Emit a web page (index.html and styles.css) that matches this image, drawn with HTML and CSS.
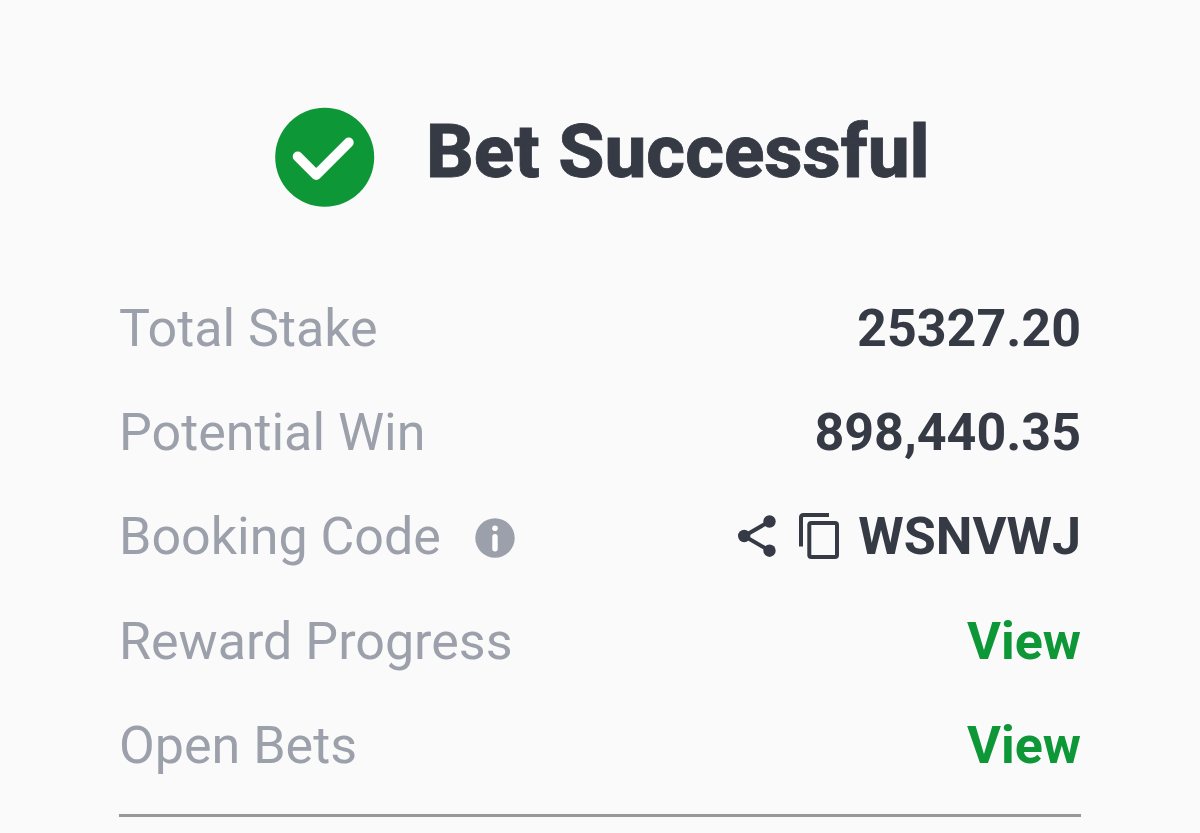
FILE: index.html
```html
<!DOCTYPE html>
<html lang="en">

<head>
    <meta charset="UTF-8">
    <meta name="viewport" content="width=device-width, initial-scale=1.0">
    <title>Bet Successful</title>
    <link rel="stylesheet" href="styles.css">
</head>

<body>
<div class="container">
    <div class="header">
        <svg class="success-icon" viewBox="0 0 100 100">
            <circle cx="49.7" cy="50.2" r="49.5" fill="#0d9737"/>
            <path d="M22.7 49.5 L41.2 68 L73.7 35.5" fill="none" stroke="#fff" stroke-width="10" stroke-linecap="round" stroke-linejoin="round"/>
        </svg>
        <h1>Bet Successful</h1>
    </div>

    <!-- Bet details -->
    <div class="details">
        <div class="row">
            <span class="label">Total Stake</span>
            <span class="value">25327.20</span>
        </div>
        <div class="row">
            <span class="label">Potential Win</span>
            <span class="value">898,440.35</span>
        </div>
        <div class="row">
            <span class="label">Booking Code</span>
            <svg class="info-icon" viewBox="0 0 40 40">
                <circle cx="20" cy="20" r="19.7" fill="#9ca0ab"/>
                <circle cx="20" cy="10.2" r="2.8" fill="#fff"/>
                <rect x="17.3" y="16" width="5.4" height="17.5" rx="2.7" fill="#fff"/>
            </svg>
            <span class="value code">
                <svg class="share-icon" viewBox="0 0 40 42">
                    <path d="M31.5 6.5 L6.2 21 L31.5 35.7" fill="none" stroke="#353a45" stroke-width="4"/>
                    <circle cx="31.5" cy="6.5" r="6.2" fill="#353a45"/>
                    <circle cx="6.2" cy="21" r="6.2" fill="#353a45"/>
                    <circle cx="31.5" cy="35.7" r="6.2" fill="#353a45"/>
                </svg>
                <svg class="copy-icon" viewBox="0 0 40 46">
                    <path d="M2 33.5 V4.5 Q2 2 4.5 2 H30" fill="none" stroke="#353a45" stroke-width="4"/>
                    <rect x="10.3" y="10" width="27.7" height="34" rx="2" fill="none" stroke="#353a45" stroke-width="4"/>
                </svg>
                <span class="code-text">WSNVWJ</span>
            </span>
        </div>
        <div class="row">
            <span class="label">Reward Progress</span>
            <a class="value link">View</a>
        </div>
        <div class="row">
            <span class="label">Open Bets</span>
            <a class="value link">View</a>
        </div>
    </div>
</div>
</body>

</html>
```
FILE: styles.css
```css
body {
    font-family: 'Roboto', sans-serif;
    background-color: #fafafa;
    margin: 0;
    color: #353a45;
}

.container {
    padding: 107px 119px 0 119px;
}

.header {
    display: flex;
    padding-left: 156px;
    height: 169px;
}

.success-icon {
    width: 100px;
    height: 100px;
}

h1 {
    margin: 0 0 0 51px;
    font-size: 74.5px;
    line-height: 89px;
    font-weight: 800;
    -webkit-text-stroke: 0.8px #353a45;
    white-space: nowrap;
}

.details {
    height: 538px;
    border-bottom: 3px solid #97989c;
    box-shadow: 0 2px 0 #f0f0f2;
}

.row {
    display: flex;
    align-items: center;
    height: 104.3px;
    font-size: 52px;
    white-space: nowrap;
}

.label {
    color: #9ca0ab;
}

.value {
    margin-left: auto;
    font-weight: 700;
}

.code {
    display: flex;
    align-items: center;
}

.info-icon {
    width: 40px;
    height: 40px;
    margin: 2px 0 0 34px;
}

.share-icon {
    width: 40px;
    height: 42px;
    margin-bottom: 2px;
}

.copy-icon {
    width: 40px;
    height: 46px;
    margin: 0 19px 2px 21px;
}

.link {
    color: #0d9737;
}
```
